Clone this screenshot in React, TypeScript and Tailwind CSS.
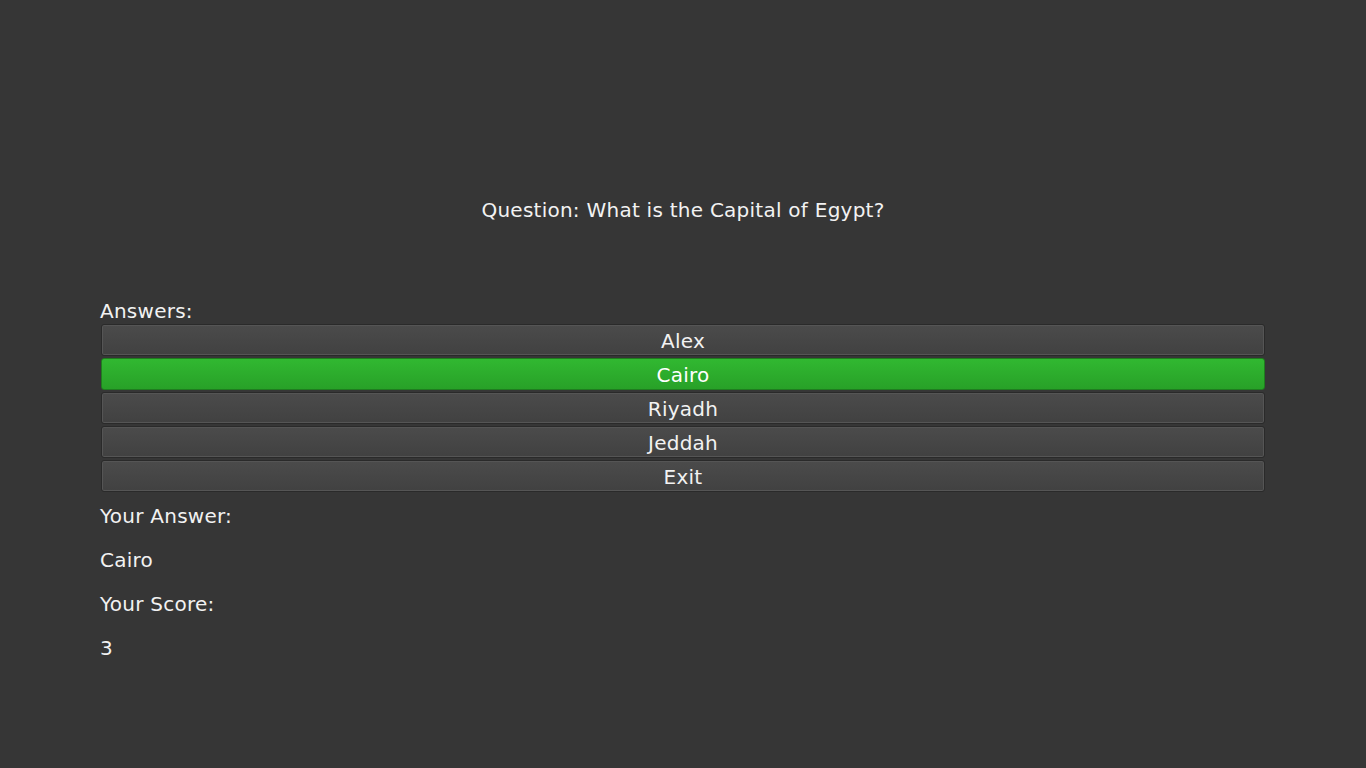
const answers = ["Alex", "Cairo", "Riyadh", "Jeddah", "Exit"];

export default function App() {
  const selected = "Cairo";
  return (
    <div className="h-screen bg-[#363636] text-[#f2f2f2] text-[20px] leading-[24px] tracking-[0.25px] font-['DejaVu_Sans',sans-serif] px-[100px]">
      <p className="pt-[198px] text-center">Question: What is the Capital of Egypt?</p>

      <p className="mt-[77px]">Answers:</p>
      <div className="mt-[1px] mx-[1px] flex flex-col gap-[2px]">
        {answers.map((a) => (
          <button
            key={a}
            className={
              a === selected
                ? "h-[32px] w-full rounded-[3px] border border-[#1f7d1f] bg-gradient-to-b from-[#31b831] to-[#28a128] pt-[2px] text-center text-white"
                : "h-[32px] w-full rounded-[3px] border border-[#2a2a2a] bg-gradient-to-b from-[#4b4b4b] to-[#414141] pt-[2px] text-center text-[#f2f2f2] shadow-[inset_0_0_0_1px_#555]"
            }
          >
            {a}
          </button>
        ))}
      </div>

      <div className="mt-[12px] flex flex-col gap-[20px]">
        <p>Your Answer:</p>
        <p>{selected}</p>
        <p>Your Score:</p>
        <p>3</p>
      </div>
    </div>
  );
}
